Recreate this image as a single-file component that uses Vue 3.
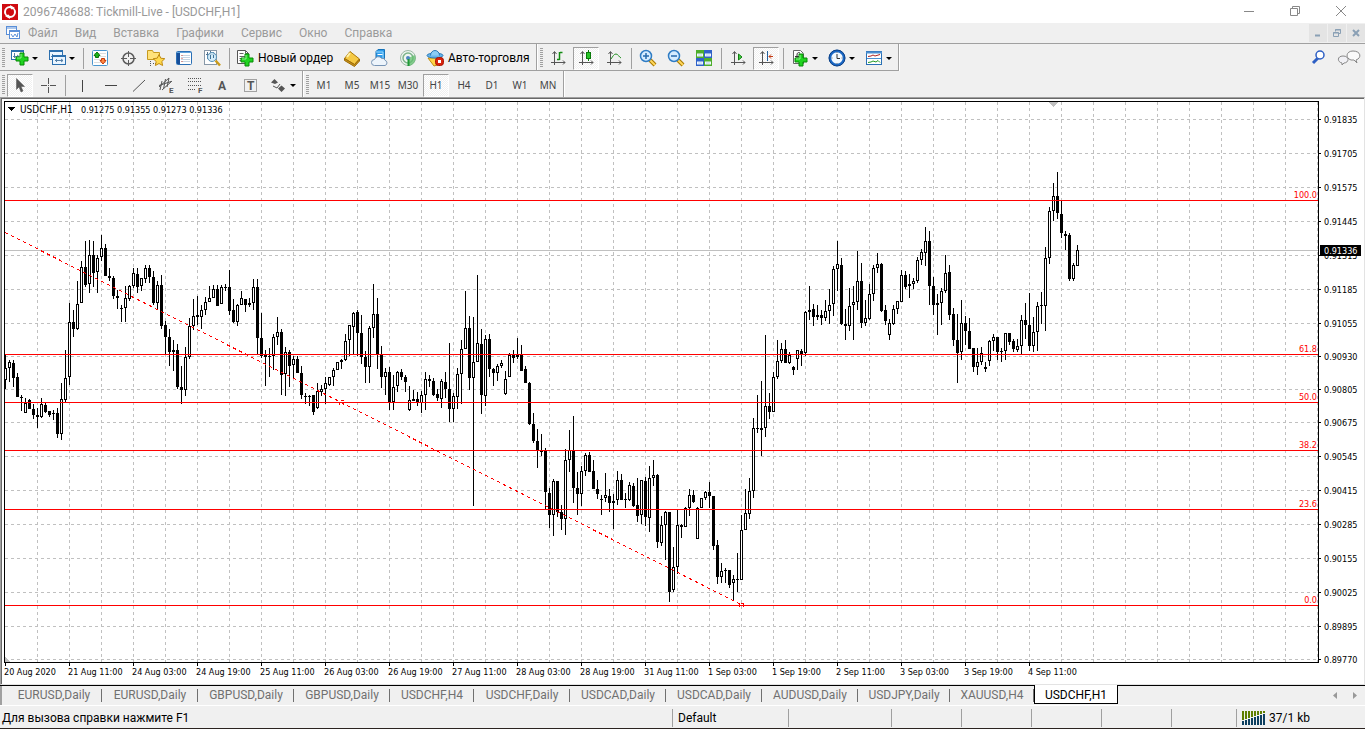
<script setup>
import { ref } from 'vue'

const menu = ['Файл', 'Вид', 'Вставка', 'Графики', 'Сервис', 'Окно', 'Справка']

const plus = (x, y) =>
  `<path d="M${x + 4} ${y}h4v4h4v4h-4v4h-4v-4h-4v-4h4z" fill="#1fd31f" stroke="#078a07"/><path d="M${x + 5} ${y + 1}v4h-4" fill="none" stroke="#8df58d"/>`
const axes = '<path d="M6.500 4v13M3 14.500h14M4.500 6l2-2.500 2 2.500M15 12.500l2 2-2 2" fill="none" stroke="#555"/>'
const lens = '<path d="M12 12l5 5" stroke="#a87800" stroke-width="4"/><path d="M12 12l5 5" stroke="#ffd75a" stroke-width="2"/><circle cx="8" cy="8" r="5.500" fill="#d5ecff" stroke="#2f7cc4" stroke-width="1.500"/>'
const letter = (x, y, size, ch) =>
  `<text x="${x}" y="${y}" font-size="${size}" font-weight="700" fill="#555">${ch}</text>`

const icons = {
  newChart: `<rect x="1.500" y="2.500" width="12" height="9" fill="#fff" stroke="#2b6fae"/><path d="M1 3h13" stroke="#2b6fae" stroke-width="2"/><path d="M4.500 5v5M3 8.500h6M7 7l2 1.500" stroke="#5580a8" fill="none"/>${plus(6, 5)}`,
  profiles: '<rect x="2.500" y="2.500" width="13" height="9" fill="#eaf5ff" stroke="#2b6fae"/><path d="M2 3h14" stroke="#2b6fae" stroke-width="2"/><path d="M4 8.500h7M5.500 6v4" stroke="#5580a8"/><rect x="5.500" y="7.500" width="13" height="9" fill="#eaf5ff" stroke="#2b6fae"/><path d="M5 8h14" stroke="#2b6fae" stroke-width="2"/><path d="M8 12.500h8M9.500 11v3M14 11l2 1.500-2 1.500" stroke="#5580a8" fill="none"/>',
  market: '<rect x="2.500" y="2.500" width="15" height="15" rx="1" fill="#fff" stroke="#4a96cf"/><path d="M4 5.500h12M4 8.500h12M4 11.500h12M4 14.500h12" stroke="#ddd"/><path d="M7 4l3 3.500h-1.500v2h-3v-2H4z" fill="#19b519" stroke="#087508"/><path d="M13 16l-3-3.500h1.500v-2h3v2H16z" fill="#ff8742" stroke="#c53c0b"/>',
  crosshair: '<circle cx="10.500" cy="10.500" r="5.500" fill="none" stroke="#5c5c5c" stroke-width="1.500"/><path d="M10.500 3v6M10.500 12v6M3 10.500h6M12 10.500h6" stroke="#5c5c5c"/>',
  favorites: '<path d="M1.500 4V2.500h5l1 2h6v7h-12z" fill="#ffe27a" stroke="#c79a1e"/><path d="M4.500 13v5M7 15.500h3" stroke="#555" stroke-dasharray="1 1"/><path d="M13 6.500l1.800 3.700 4 .5-3 2.800.8 4-3.600-2-3.600 2 .8-4-3-2.800 4-.5z" fill="#ffd94d" stroke="#c08a10"/>',
  dataWindow: '<rect x="2.500" y="3.500" width="15" height="13" rx="1" fill="#fff" stroke="#2a6fb5"/><rect x="3" y="4" width="3" height="12" fill="#174f9a"/><path d="M3 4.500h14" stroke="#5fa3dd"/><path d="M7 7.500h9M7 9.500h9M7 11.500h9M7 13.500h9" stroke="#c5d4e3"/><path d="M7.500 7.500h1M7.500 10.500h1M7.500 13.500h1" stroke="#d54"/>',
  tester: '<rect x="2.500" y="2.500" width="12" height="14" fill="#fff" stroke="#8898a8"/><path d="M5.500 4v7M8.500 3v7M11.500 4v6M4 6.500h9" stroke="#54738f"/><circle cx="10" cy="9" r="4.500" fill="#c9e7f7" fill-opacity=".8" stroke="#5791b8"/><path d="M8.500 7v4M11.500 7v3" stroke="#3e7298"/><path d="M13.500 12.500l4.500 5" stroke="#c99a1a" stroke-width="2.500"/>',
  order: `<path d="M2.500 2.500h8l3 3v10h-11z" fill="#fff" stroke="#555"/><path d="M10.500 2.500v3h3M4.500 5.500h4M4.500 8.500h7M4.500 10.500h5M4.500 12.500h3" fill="none" stroke="#666"/>${plus(6, 6)}`,
  book: '<path d="M2.500 10.500L8 3.500l9.500 7.500-5 5.500z" fill="#f5c944" stroke="#ab7909"/><path d="M2.500 10.500v2l10 6 5-5.500v-2l-5 5.500z" fill="#c9921a" stroke="#9b6b06"/><path d="M8 5l-3 4" stroke="#fff2a8" stroke-width="2"/>',
  cloud: '<path d="M6 3.500l2-2h6.500v9H6z" fill="#2f9bea" stroke="#1673b8"/><path d="M6 4h7v6" fill="none" stroke="#9bdcff"/><path d="M7.500 6.500h5" stroke="#fff"/><path d="M4.500 17.500a3 3 0 010-6 4 4 0 017-1.200 3 3 0 013.500 2 2.700 2.700 0 010 5.200z" fill="#edf4fb" stroke="#7794b5"/>',
  signal: '<circle cx="10" cy="10" r="7.500" fill="#eef6f0" stroke="#9cb9a6"/><circle cx="10" cy="10" r="5" fill="none" stroke="#7cb38a" stroke-width="1.500"/><path d="M10 10v8a8 8 0 007-11" fill="#62bd6d" fill-opacity=".75"/><circle cx="10" cy="10" r="2" fill="#4c86c2"/><path d="M10.500 11v7" stroke="#209937" stroke-width="2"/>',
  auto: '<path d="M3 10h14l-3 6.500-5 1.500z" fill="#ffd448" stroke="#c08d12"/><ellipse cx="10" cy="7.500" rx="8" ry="2.500" fill="#65b4ea" stroke="#2b79b8"/><path d="M5.500 7.500a4.500 5 0 019 0" fill="#8bcdf5" stroke="#2b79b8"/><rect x="10.500" y="9.500" width="8" height="8" rx="3" fill="#d8230e" stroke="#a81200"/><rect x="13" y="12" width="3" height="3" fill="#fff"/>',
  bars: `${axes}<path d="M11.500 4v8M9 11.500h2.500M12 4.500h2.500" stroke="#128b12" stroke-width="1.500"/>`,
  candles: `${axes}<path d="M12.500 2v11" stroke="#0a7a0a"/><rect x="10.500" y="4.500" width="4" height="6" fill="#29c529" stroke="#0a7a0a"/>`,
  line: `${axes}<path d="M7 11c2-3 3-5 5-5s3 3 5 4" fill="none" stroke="#228f22"/>`,
  zoomIn: `${lens}<path d="M5 8h6M8 5v6" stroke="#2569ad" stroke-width="1.500"/>`,
  zoomOut: `${lens}<path d="M5 8h6" stroke="#2569ad" stroke-width="1.500"/>`,
  tile: '<rect x="2" y="2" width="8" height="8" fill="#4eae2c"/><rect x="10" y="2" width="8" height="8" fill="#2f62c9"/><rect x="2" y="10" width="8" height="8" fill="#2f62c9"/><rect x="10" y="10" width="8" height="8" fill="#4eae2c"/><path d="M3 5.500h6v3H3zM11 5.500h6v3h-6zM3 13.500h6v3H3zM11 13.500h6v3h-6z" fill="#f2f8ff"/><path d="M4 7h4M12 7h4M4 15h4M12 15h4" stroke="#b9d2ec"/>',
  scroll: `${axes}<path d="M10.500 6v6l3.500-3z" fill="#43cf43" stroke="#118011"/>`,
  shift: `${axes}<path d="M11.500 3v10" stroke="#225f9c"/><path d="M17 8.500h-4M15 6.500l-2 2 2 2" stroke="#c23a13" fill="none"/>`,
  indicators: `<path d="M3.500 2.500h7l3 3v10h-10z" fill="#fff" stroke="#666"/><path d="M10 5c-2-1-3 0-3 2v6M5 8.500h4" fill="none" stroke="#333"/>${plus(5, 6)}`,
  clock: '<circle cx="10" cy="10" r="7" fill="#f2f9ff" stroke="#1a67c4" stroke-width="2.500"/><circle cx="10" cy="10" r="8" fill="none" stroke="#0e4186"/><path d="M10 6v4.500h3" stroke="#333" fill="none"/><path d="M10 4v1M10 15v1M4.500 10h1M14.500 10h1" stroke="#777"/>',
  template: '<rect x="2.500" y="3.500" width="15" height="13" fill="#fff" stroke="#2a6fb5"/><path d="M2 4.500h16" stroke="#4a8fd0" stroke-width="2"/><path d="M3 10.500h14" stroke="#4a8fd0"/><path d="M4 8.500l3-.5 2-1 2 1 5-1.500" stroke="#a22" fill="none"/><path d="M4 14.500l3-.5 2-1 3 1 2-1.500 2 2" stroke="#292" fill="none"/>',
  cursor: '<path d="M6.500 3.500v11l2.500-2.500 2 5 2-1-2-4.500h3.500z" fill="#555" stroke="#555" stroke-width=".5"/>',
  cross: '<path d="M10.500 3v6M10.500 12v6M3 10.500h6M12 10.500h6" stroke="#555"/><path d="M10 10.500h1" stroke="#555"/>',
  vline: '<path d="M10.500 5v12" stroke="#444"/>',
  hline: '<path d="M5 10.500h12" stroke="#444"/>',
  trend: '<path d="M5 16.500L17 5" stroke="#555"/>',
  equi: `<path d="M3 12l10-9M6 15l10-9M6 6l-2 9M9.500 4l-2 10M13 3l-2 9M3 10.500l12-4" stroke="#555" fill="none"/>${letter(13, 18, 8, 'E')}`,
  fibo: `<path d="M4 3.500h14M4 6.500h14M4 10.500h14M4 14.500h8" stroke="#555" stroke-dasharray="1 1"/>${letter(14, 18, 8, 'F')}`,
  textA: letter(6, 15, 12, 'A'),
  label: `<rect x="4.500" y="4.500" width="12" height="12" fill="none" stroke="#555" stroke-dasharray="1 1"/>${letter(7, 15, 12, 'T')}`,
  arrows: '<path d="M3 7.500L6.500 4l3.500 3.500-3 1.500zM10 13.500l3.500-3 3.500 3-3.500 3.500z" fill="#555"/><path d="M5 11l4 2 3-4" stroke="#555" fill="none"/>'
}

const fileTools = [
  { icon: 'newChart', name: 'Новый график', drop: true },
  { icon: 'profiles', name: 'Профили', drop: true },
  { sep: true },
  { icon: 'market', name: 'Обзор рынка' },
  { icon: 'crosshair', name: 'Окно данных' },
  { icon: 'favorites', name: 'Навигатор' },
  { icon: 'dataWindow', name: 'Терминал' },
  { icon: 'tester', name: 'Тестер стратегий' },
  { sep: true },
  { icon: 'order', name: 'Новый ордер', text: 'Новый ордер', cls: 'order' },
  { icon: 'book', name: 'MetaEditor' },
  { icon: 'cloud', name: 'Хостинг' },
  { icon: 'signal', name: 'Сигналы' },
  { icon: 'auto', name: 'Авто-торговля', text: 'Авто-торговля', cls: 'autotrade' }
]
const chartTools = [
  { icon: 'bars', name: 'Бары' },
  { icon: 'candles', name: 'Свечи', on: true },
  { icon: 'line', name: 'Линия' },
  { sep: true },
  { icon: 'zoomIn', name: 'Увеличить' },
  { icon: 'zoomOut', name: 'Уменьшить' },
  { icon: 'tile', name: 'Окна плиткой' },
  { sep: true },
  { icon: 'scroll', name: 'Автопрокрутка' },
  { icon: 'shift', name: 'Сдвиг графика', on: true },
  { sep: true },
  { icon: 'indicators', name: 'Индикаторы', drop: true },
  { icon: 'clock', name: 'Периоды', drop: true },
  { icon: 'template', name: 'Шаблоны', drop: true }
]
const drawTools = [
  { icon: 'cursor', name: 'Курсор', on: true },
  { icon: 'cross', name: 'Перекрестие' },
  { sep: true },
  { icon: 'vline', name: 'Вертикальная линия' },
  { icon: 'hline', name: 'Горизонтальная линия' },
  { icon: 'trend', name: 'Трендовая линия' },
  { icon: 'equi', name: 'Канал' },
  { icon: 'fibo', name: 'Линии Фибоначчи' },
  { icon: 'textA', name: 'Текст' },
  { icon: 'label', name: 'Метка' },
  { icon: 'arrows', name: 'Стрелки', drop: true }
]
const periods = ['M1', 'M5', 'M15', 'M30', 'H1', 'H4', 'D1', 'W1', 'MN']
const period = ref('H1')

const prices = [
  [119, '0.91835'], [153, '0.91705'], [187, '0.91575'], [221, '0.91445'], [255, '0.91315'],
  [289, '0.91185'], [323, '0.91055'], [356, '0.90930'], [389, '0.90805'], [422, '0.90675'],
  [456, '0.90545'], [490, '0.90415'], [524, '0.90285'], [558, '0.90155'], [592, '0.90025'],
  [626, '0.89895'], [659, '0.89770']
]
const columns = Array.from({ length: 41 }, (_, i) => 37 + 32 * i)
const levels = [[200, '100.0'], [354, '61.8'], [402, '50.0'], [450, '38.2'], [509, '23.6'], [605, '0.0']]
const dates = [
  '20 Aug 2020', '21 Aug 11:00', '24 Aug 03:00', '24 Aug 19:00', '25 Aug 11:00', '26 Aug 03:00',
  '26 Aug 19:00', '27 Aug 11:00', '28 Aug 03:00', '28 Aug 19:00', '31 Aug 11:00', '1 Sep 03:00',
  '1 Sep 19:00', '2 Sep 11:00', '3 Sep 03:00', '3 Sep 19:00', '4 Sep 11:00'
]

// One candle per entry: high, body top, body bottom, low; "u" is a rising (hollow) candle, "d" a falling one.
const series = `354 368 380 389u 360 362 368 382u 360 363 378 387d 373 377 397 397d 395 397 398 411d 398 403 413 413u
399 400 409 409d 404 409 415 419d 408 415 417 428d 398 404 417 418u 403 405 412 413d 411 411 415 417d
410 413 414 420d 408 413 434 438d 383 399 434 440u 350 378 400 403u 303 322 377 385u 310 322 329 337d
281 304 329 330u 261 267 303 303u 241 267 285 287d 240 255 284 293u 241 255 273 287d 255 258 272 293u
235 248 257 261u 244 248 276 276d 268 276 278 281d 276 278 296 299d 290 296 298 309d 305 308 309 322d
286 298 308 322u 285 286 299 301u 268 273 286 288u 268 274 287 293d 278 278 286 291u 265 268 279 283u
265 268 277 283d 271 277 303 305d 281 285 303 309u 275 285 326 329d 321 325 337 355d 329 337 352 366d
340 350 352 371d 344 350 387 389d 366 387 390 404d 347 357 390 396u 318 326 357 359u 299 316 326 330u
296 315 317 325d 305 310 317 329u 297 302 310 315u 286 298 302 302u 285 289 298 298u 285 289 306 306d
285 287 304 304u 284 287 288 291d 270 287 311 315d 299 310 322 323d 304 305 322 326u 291 298 305 305u
299 299 305 312d 298 303 305 307d 279 287 303 310u 279 287 338 354d 313 338 356 358d 350 355 357 386d
348 356 357 377d 334 337 356 370u 317 332 337 345u 329 332 375 395d 347 352 374 396u 350 352 366 387d
356 359 365 378u 356 359 373 373d 366 373 395 399d 393 396 397 404d 395 396 397 406d 395 395 412 415d
383 391 408 409u 385 389 392 396u 377 383 389 404u 377 377 385 386u 368 370 377 386u 362 362 370 370u
359 360 362 369d 334 341 360 361u 325 325 340 356u 312 313 327 354u 310 312 333 356d 315 333 357 364d
351 357 367 383d 326 328 367 383u 284 314 328 338u 298 314 354 369d 346 355 377 388d 368 372 377 395u
367 372 402 410d 375 387 402 410u 371 372 386 392u 369 372 377 380d 375 377 382 392d 386 400 410 411u
390 399 401 401d 392 399 403 406d 391 395 403 413u 372 379 395 410u 375 379 381 387d 378 381 395 396d
389 394 398 401d 379 381 399 408u 372 382 389 398d 343 389 409 422d 393 396 409 422u 368 374 397 409u
340 349 374 404u 291 328 349 349u 316 328 378 390d 317 362 378 506u 275 343 362 362u 329 344 395 414d
335 339 396 406u 334 339 369 377d 368 369 373 386d 364 366 373 381u 360 363 366 368u 371 379 394 395u
353 355 377 377u 350 355 358 363d 338 355 357 359u 345 355 371 371d 366 369 383 383d 382 383 424 425d
413 424 441 443d 429 441 450 468d 434 450 452 456d 448 450 492 510d 488 493 515 528d 479 481 515 536u
481 481 512 517d 505 512 519 530d 449 460 519 535u 430 450 460 472u 416 450 488 503d 472 488 494 515d
466 471 494 506u 453 455 471 476u 452 455 472 472d 460 471 489 489d 480 489 494 499d 495 499 500 515d
473 495 498 502u 489 496 503 512d 494 501 503 529u 471 480 500 505u 474 480 500 500d 493 499 500 508d
482 485 500 501u 483 486 506 507d 478 505 516 522d 480 480 515 524u 477 481 517 526d 466 478 518 532u
460 475 478 486u 474 475 542 548d 516 525 543 546u 511 512 525 560u 512 512 592 602d 547 567 590 592u
509 525 567 574u 524 525 527 538d 507 508 527 527u 489 495 508 516u 490 495 502 503d 507 508 539 539u
498 498 508 508u 491 492 498 500u 482 492 496 508d 496 496 546 550d 540 545 577 584d 563 571 577 583u
568 570 571 583d 570 570 585 588d 575 579 583 600u 553 579 580 592d 515 530 580 580u 489 513 530 530u
478 491 514 519u 418 428 491 498u 395 428 429 433d 381 428 430 456d 335 406 428 437u 393 406 412 419d
372 377 412 412u 340 361 377 379u 343 349 361 363u 340 349 363 363d 352 355 363 364u 366 367 370 375d
350 350 359 370u 349 351 354 366d 311 312 353 356u 286 310 312 320u 304 309 317 326d 305 315 317 320d
310 315 318 325d 300 311 318 321u 289 305 311 324u 266 269 304 316u 241 264 269 291u 258 265 324 325d
309 324 326 340d 288 306 326 331u 286 302 305 340u 251 281 302 310u 263 281 323 328d 300 318 323 326u
284 294 319 320u 265 268 294 301u 253 264 268 273u 263 264 311 312d 305 310 321 325d 319 323 335 340u
305 309 324 325u 301 301 309 314u 270 275 302 302u 271 275 287 289d 274 284 286 298u 278 281 284 289u
257 260 281 283u 249 252 260 265u 227 241 253 266u 231 241 286 305d 277 286 305 315d 294 303 305 335u
288 291 303 325u 255 273 291 293u 265 272 315 320d 308 314 340 346d 314 340 353 383d 300 323 352 360u
316 323 331 345d 318 331 349 349d 348 348 367 372d 348 362 367 375u 347 353 362 365u 362 367 369 372u
340 341 361 366u 334 337 341 351u 337 337 352 360d 348 351 352 362d 333 333 351 360u 333 333 342 345d
339 341 349 352d 339 346 350 352u 315 320 346 354u 303 320 325 339d 293 325 346 351d 317 332 346 352u
302 306 332 351u 292 305 306 324d 247 258 306 331u 207 211 258 264u 183 196 211 221u 172 196 213 219d
200 214 233 238d 231 234 236 250d 233 235 279 281d 263 265 279 281u 245 250 266 266u`
const candles = [...series.matchAll(/(\d+) (\d+) (\d+) (\d+)([ud])/g)].map((m, i) => ({
  x: 5 + 4 * i,
  high: +m[1],
  top: +m[2],
  bottom: +m[3],
  low: +m[4],
  up: m[5] === 'u'
}))
const wicks = candles.map(c => `M${c.x} ${c.high}h1V${c.low}h-1z`).join('')
const bodies = candles.map(c => `M${c.x - 1} ${c.top}h3V${Math.max(c.bottom, c.top + 1)}h-3z`).join('')
const hollows = candles
  .filter(c => c.up && c.bottom - c.top > 2)
  .map(c => `M${c.x} ${c.top + 1}h1V${c.bottom - 1}h-1z`)
  .join('')

const tabs = [
  ['EURUSD,Daily', 'daily'], ['EURUSD,Daily', 'daily'], ['GBPUSD,Daily', 'daily'], ['GBPUSD,Daily', 'daily'],
  ['USDCHF,H4', 'hour'], ['USDCHF,Daily', 'daily'], ['USDCAD,Daily', 'daily'], ['USDCAD,Daily', 'daily'],
  ['AUDUSD,Daily', 'daily'], ['USDJPY,Daily', 'short'], ['XAUUSD,H4', 'hour'], ['USDCHF,H1', 'hour']
]
const activeTab = ref(11)
const traffic = Array.from({ length: 8 }, (_, i) => i)
</script>

<template>
  <div class="app">
    <header class="title">
      <svg class="logo" width="16" height="16" viewBox="0 0 16 16">
        <rect width="16" height="16" fill="#cf0a10" />
        <circle cx="8" cy="8" r="5" fill="none" stroke="#fff" stroke-width="2" />
        <path d="M9 1h5v5zM7 15H2v-5z" fill="#cf0a10" />
        <path d="M8 1l5 3-4 2zM8 15l-5-3 4-2z" fill="#fff" />
        <circle cx="8" cy="8" r="3" fill="#cf0a10" />
      </svg>
      <h1>2096748688: Tickmill-Live - [USDCHF,H1]</h1>
      <div class="winbtns">
        <button aria-label="Свернуть"><svg width="12" height="12"><path d="M1 6.500h10" stroke="#888" /></svg></button>
        <button aria-label="Восстановить"><svg width="12" height="12"><path d="M1.500 3.500h7v7h-7zM3.500 3V1.500h7v7H9" fill="none" stroke="#888" /></svg></button>
        <button aria-label="Закрыть"><svg width="12" height="12"><path d="M1 1l10 10M11 1L1 11" stroke="#888" /></svg></button>
      </div>
    </header>

    <nav class="menu">
      <svg class="mdi" width="16" height="16">
        <rect x="1.500" y="1.500" width="10" height="8" fill="#fff" stroke="#5a8fd8" />
        <path d="M1 3h11M5 6.500h7" stroke="#5a8fd8" />
        <rect x="4.500" y="5.500" width="10" height="8" fill="#fff" stroke="#5a8fd8" />
        <path d="M4 6.500h11M6 9l2 3 2-3 2 3 1-4" fill="none" stroke="#5a8fd8" />
      </svg>
      <button v-for="m in menu" :key="m">{{ m }}</button>
      <div class="childbtns">
        <button aria-label="Свернуть окно"><svg width="10" height="10"><path d="M2 7.500h5" stroke="#8aa0b5" stroke-width="2" /></svg></button>
        <button aria-label="Восстановить окно"><svg width="10" height="10"><path d="M1.500 4.500h5v4h-5zM3.500 3.500v-2h5v4H7M1 5h6M3 2h6" fill="none" stroke="#8aa0b5" /></svg></button>
        <button aria-label="Закрыть окно"><svg width="10" height="10"><path d="M2 2l6 6M8 2L2 8" stroke="#8aa0b5" stroke-width="2" /></svg></button>
      </div>
    </nav>

    <div class="toolrow first">
      <div v-for="(bar, n) in [fileTools, chartTools]" :key="n" class="toolbar">
        <i class="grip"></i>
        <template v-for="(t, i) in bar" :key="i">
          <i v-if="t.sep" class="sep"></i>
          <button v-else class="tool" :class="[t.cls, { on: t.on, drop: t.drop }]" :aria-label="t.name">
            <svg width="20" height="20" v-html="icons[t.icon]"></svg>
            <span v-if="t.text">{{ t.text }}</span>
            <i v-if="t.drop" class="caret"></i>
          </button>
        </template>
      </div>
      <div class="corner">
        <button aria-label="Поиск"><svg width="18" height="18"><path d="M3 14l5-5" stroke="#2d5fc4" stroke-width="3" /><circle cx="10" cy="6" r="4" fill="#fff" stroke="#2d5fc4" stroke-width="1.500" /></svg></button>
        <button aria-label="Чат"><svg width="24" height="18"><path d="M14 11c-6-2-5-9 2-9 8 0 9 7 3 9l1 3-3-3z" fill="#fafafa" stroke="#888" /><path d="M5 14c-5-1-5-7 1-7 7 0 6 7 1 7l-2 2z" fill="#f0f0f4" stroke="#888" /></svg></button>
      </div>
    </div>

    <div class="toolrow">
      <div class="toolbar">
        <i class="grip"></i>
        <template v-for="(t, i) in drawTools" :key="i">
          <i v-if="t.sep" class="sep"></i>
          <button v-else class="tool" :class="{ on: t.on, drop: t.drop }" :aria-label="t.name">
            <svg width="20" height="20" v-html="icons[t.icon]"></svg>
            <i v-if="t.drop" class="caret"></i>
          </button>
        </template>
      </div>
      <div class="toolbar">
        <i class="grip"></i>
        <button v-for="p in periods" :key="p" class="tool period" :class="{ on: p === period }" @click="period = p">{{ p }}</button>
      </div>
    </div>

    <main class="window">
      <div class="plot">
        <svg class="canvas" shape-rendering="crispEdges">
          <g transform="translate(-5 -102)">
            <path v-for="p in prices" :key="p[0]" :d="`M5 ${p[0]}.5H4000`" class="grid" />
            <path v-for="c in columns" :key="c" :d="`M${c}.5 102V4000`" class="grid" />
            <path d="M5 250.500H4000" stroke="#c0c0c0" />
            <path :d="wicks" />
            <path :d="bodies" />
            <path :d="hollows" fill="#fff" />
            <path v-for="l in levels" :key="l[0]" :d="`M5 ${l[0]}.5H4000`" stroke="#f00" />
            <path d="M5 232.500L741 604.500" pathLength="736" stroke="#f00" stroke-dasharray="3 3" />
            <path d="M341 400.500h3M339.500 402v3M343.500 402v3M741 603.500h3M739.500 604v3M743.500 604v3" stroke="#f00" />
            <path d="M1048 102h11l-5.500 5zM5 657v5h5z" fill="#c0c0c0" />
            <path d="M8 107h7l-3.500 4z" />
          </g>
          <text x="15" y="11" class="symbol">USDCHF,H1</text>
          <text x="76" y="11">0.91275 0.91355 0.91273 0.91336</text>
        </svg>
        <svg class="levels">
          <text v-for="l in levels" :key="l[0]" x="39" :y="l[0] - 104" text-anchor="end">{{ l[1] }}</text>
        </svg>
      </div>
      <svg class="prices">
        <g transform="translate(0 -101)">
          <g v-for="p in prices" :key="p[0]">
            <path :d="`M0 ${p[0]}.5h2`" stroke="#000" />
            <text x="5" :y="p[0] + 4">{{ p[1] }}</text>
          </g>
          <path d="M1 245h41v11H1z" />
          <text x="5" y="254" fill="#fff">0.91336</text>
        </g>
      </svg>
      <div class="times"><span v-for="d in dates" :key="d">{{ d }}</span></div>
    </main>

    <nav class="tabs">
      <button v-for="(t, i) in tabs" :key="i" :class="[t[1], { active: i === activeTab }]" @click="activeTab = i">{{ t[0] }}</button>
      <div class="scroll">
        <button aria-label="Назад"><svg width="6" height="8"><path d="M5 0v7L1 3.500z" fill="#999" /></svg></button>
        <button aria-label="Вперёд"><svg width="6" height="8"><path d="M1 0v7l4-3.500z" fill="#999" /></svg></button>
      </div>
    </nav>

    <footer class="status">
      <span class="help">Для вызова справки нажмите F1</span>
      <span class="cell profile">Default</span>
      <span class="cell wide"></span>
      <span class="cell"></span>
      <span class="cell"></span>
      <span class="cell"></span>
      <span class="cell"></span>
      <span class="cell last"></span>
      <span class="cell traffic">
        <svg width="24" height="14" shape-rendering="crispEdges">
          <g v-for="i in traffic" :key="i">
            <rect :x="i * 3" y="0" width="2" :height="9 - i" fill="#5f7f00" />
            <rect :x="i * 3" :y="10 - i" width="2" :height="4 + i" fill="#0d3f5f" />
          </g>
        </svg>
        37/1 kb
      </span>
    </footer>
  </div>
</template>

<style>
body {
  margin: 0;
}
</style>

<style scoped>
.app {
  display: flex;
  flex-direction: column;
  height: 100vh;
  min-height: 729px;
  box-sizing: border-box;
  border-bottom: 1px solid #2b2320;
  background: #f0f0f0;
  font: 12px/16px Roboto, "Noto Sans", sans-serif;
  color: #000;
  overflow: hidden;
}
button {
  padding: 0;
  border: 0;
  background: none;
  font: inherit;
  color: inherit;
}
svg {
  display: block;
  flex: none;
}
.title {
  display: flex;
  align-items: center;
  height: 23px;
  background: #fff;
  color: #999;
}
.logo {
  margin: 0 5px 0 2px;
}
.title h1 {
  margin: 0;
  font-size: 12px;
  font-weight: 400;
}
.winbtns {
  display: flex;
  align-items: center;
  margin-left: auto;
  padding-right: 1px;
}
.winbtns button {
  display: flex;
  justify-content: center;
  width: 46px;
  margin-bottom: 2px;
}
.menu {
  display: flex;
  align-items: center;
  height: 20px;
  border-bottom: 1px solid #a0a0a0;
  color: #9a9a9a;
}
.mdi {
  margin: 0 7px 0 5px;
}
.menu > button {
  margin-right: 17px;
}
.childbtns {
  display: flex;
  gap: 1px;
  margin-left: auto;
}
.childbtns button {
  display: flex;
  align-items: center;
  justify-content: center;
  width: 18px;
  height: 18px;
  background: #e4e4e4;
}
.toolrow {
  display: flex;
  height: 26px;
}
.toolrow.first {
  height: 27px;
}
.toolbar {
  display: flex;
  align-items: center;
  padding: 2px 1px 0 0;
  border-right: 1px solid #a0a0a0;
  box-shadow: 1px 0 #fff;
}
.first .toolbar {
  border-bottom: 1px solid #a0a0a0;
}
.toolbar + .toolbar {
  padding-left: 1px;
}
.grip {
  width: 3px;
  height: 20px;
  margin: 0 1px 0 2px;
  background: repeating-linear-gradient(#a0a0a0 0 1px, #f0f0f0 1px 2px);
}
.sep {
  width: 1px;
  height: 21px;
  margin: 0 2px 0 3px;
  background: #a0a0a0;
}
.tool {
  display: flex;
  align-items: center;
  justify-content: center;
  width: 28px;
  height: 24px;
}
.tool.on {
  width: 26px;
  height: 23px;
  margin: 0 1px;
  box-sizing: border-box;
  border: 1px solid;
  border-color: #a0a0a0 #fff #fff #a0a0a0;
  background: repeating-conic-gradient(#fff 0 25%, #f0f0f0 0 50%) 0 0 / 2px 2px;
}
.tool.drop {
  justify-content: flex-start;
  width: 37px;
  padding-left: 4px;
  box-sizing: border-box;
}
.caret {
  margin-left: 2px;
  border: 3px solid transparent;
  border-top-color: #000;
  border-bottom: 0;
}
.tool.order,
.tool.autotrade {
  justify-content: flex-start;
  gap: 3px;
  box-sizing: border-box;
  padding-left: 3px;
  white-space: nowrap;
}
.tool.order {
  width: 106px;
}
.tool.autotrade {
  width: 113px;
}
.tool.period {
  font: 10px/12px "Noto Sans", sans-serif;
  color: #444;
}
.corner {
  display: flex;
  align-items: center;
  gap: 9px;
  margin-left: auto;
  padding-right: 4px;
}
.window {
  flex: 1;
  display: grid;
  grid-template: 1fr 21px / 1fr 45px;
  padding: 3px 0 0 3px;
  border: 1px solid;
  border-color: #a0a0a0 #e3e3e3 #e3e3e3 #a0a0a0;
  box-shadow: inset 1px 1px #696969;
  background: #fff;
  font: 9px/12px "DejaVu Sans Condensed", "Noto Sans", sans-serif;
}
.plot {
  position: relative;
  border: 1px solid #000;
  overflow: hidden;
}
.canvas {
  width: 100%;
  height: 100%;
}
.grid {
  stroke: #c0c0c0;
  stroke-dasharray: 3 3;
}
.symbol {
  font-size: 10px;
}
.levels {
  position: absolute;
  top: 0;
  right: 0;
  width: 40px;
  height: 100%;
  fill: #f00;
}
.prices {
  width: 45px;
  height: 100%;
  overflow: visible;
}
.times {
  grid-column: 1 / 3;
  display: flex;
  overflow: hidden;
}
.times span {
  flex: none;
  width: 64px;
  height: 14px;
  padding-top: 3px;
  white-space: nowrap;
  background: linear-gradient(#000, #000) 1px 0 / 1px 3px no-repeat;
}
.tabs {
  display: flex;
  height: 19px;
  padding-left: 6px;
  border-top: 1px solid #000;
  border-bottom: 1px solid #fff;
  box-shadow: inset 2px 0 #a0a0a0;
  color: #707070;
}
.tabs > button {
  height: 18px;
  text-align: center;
}
.daily {
  width: 96px;
}
.hour {
  width: 84px;
}
.short {
  width: 92px;
}
.tabs > button:not(.active) {
  background: linear-gradient(#707070, #707070) right 3px / 1px 13px no-repeat;
}
.tabs > button.active {
  height: 19px;
  margin-top: -1px;
  padding-top: 1px;
  box-sizing: border-box;
  border: 1px solid #000;
  border-top: 0;
  background: #fff;
  color: #000;
}
.scroll {
  display: flex;
  align-items: center;
  gap: 14px;
  margin-left: auto;
  padding-right: 7px;
}
.status {
  display: flex;
  align-items: center;
  height: 22px;
  padding-top: 1px;
  box-sizing: border-box;
  line-height: 18px;
}
.help {
  flex: 1;
  padding-left: 2px;
}
.cell {
  width: 70px;
  height: 18px;
  padding-left: 5px;
  border-left: 1px solid #a0a0a0;
  box-sizing: border-box;
}
.cell.profile {
  width: 116px;
}
.cell.wide {
  width: 103px;
}
.cell.last {
  width: 65px;
}
.cell.traffic {
  display: flex;
  align-items: center;
  gap: 3px;
  width: 129px;
}
</style>
